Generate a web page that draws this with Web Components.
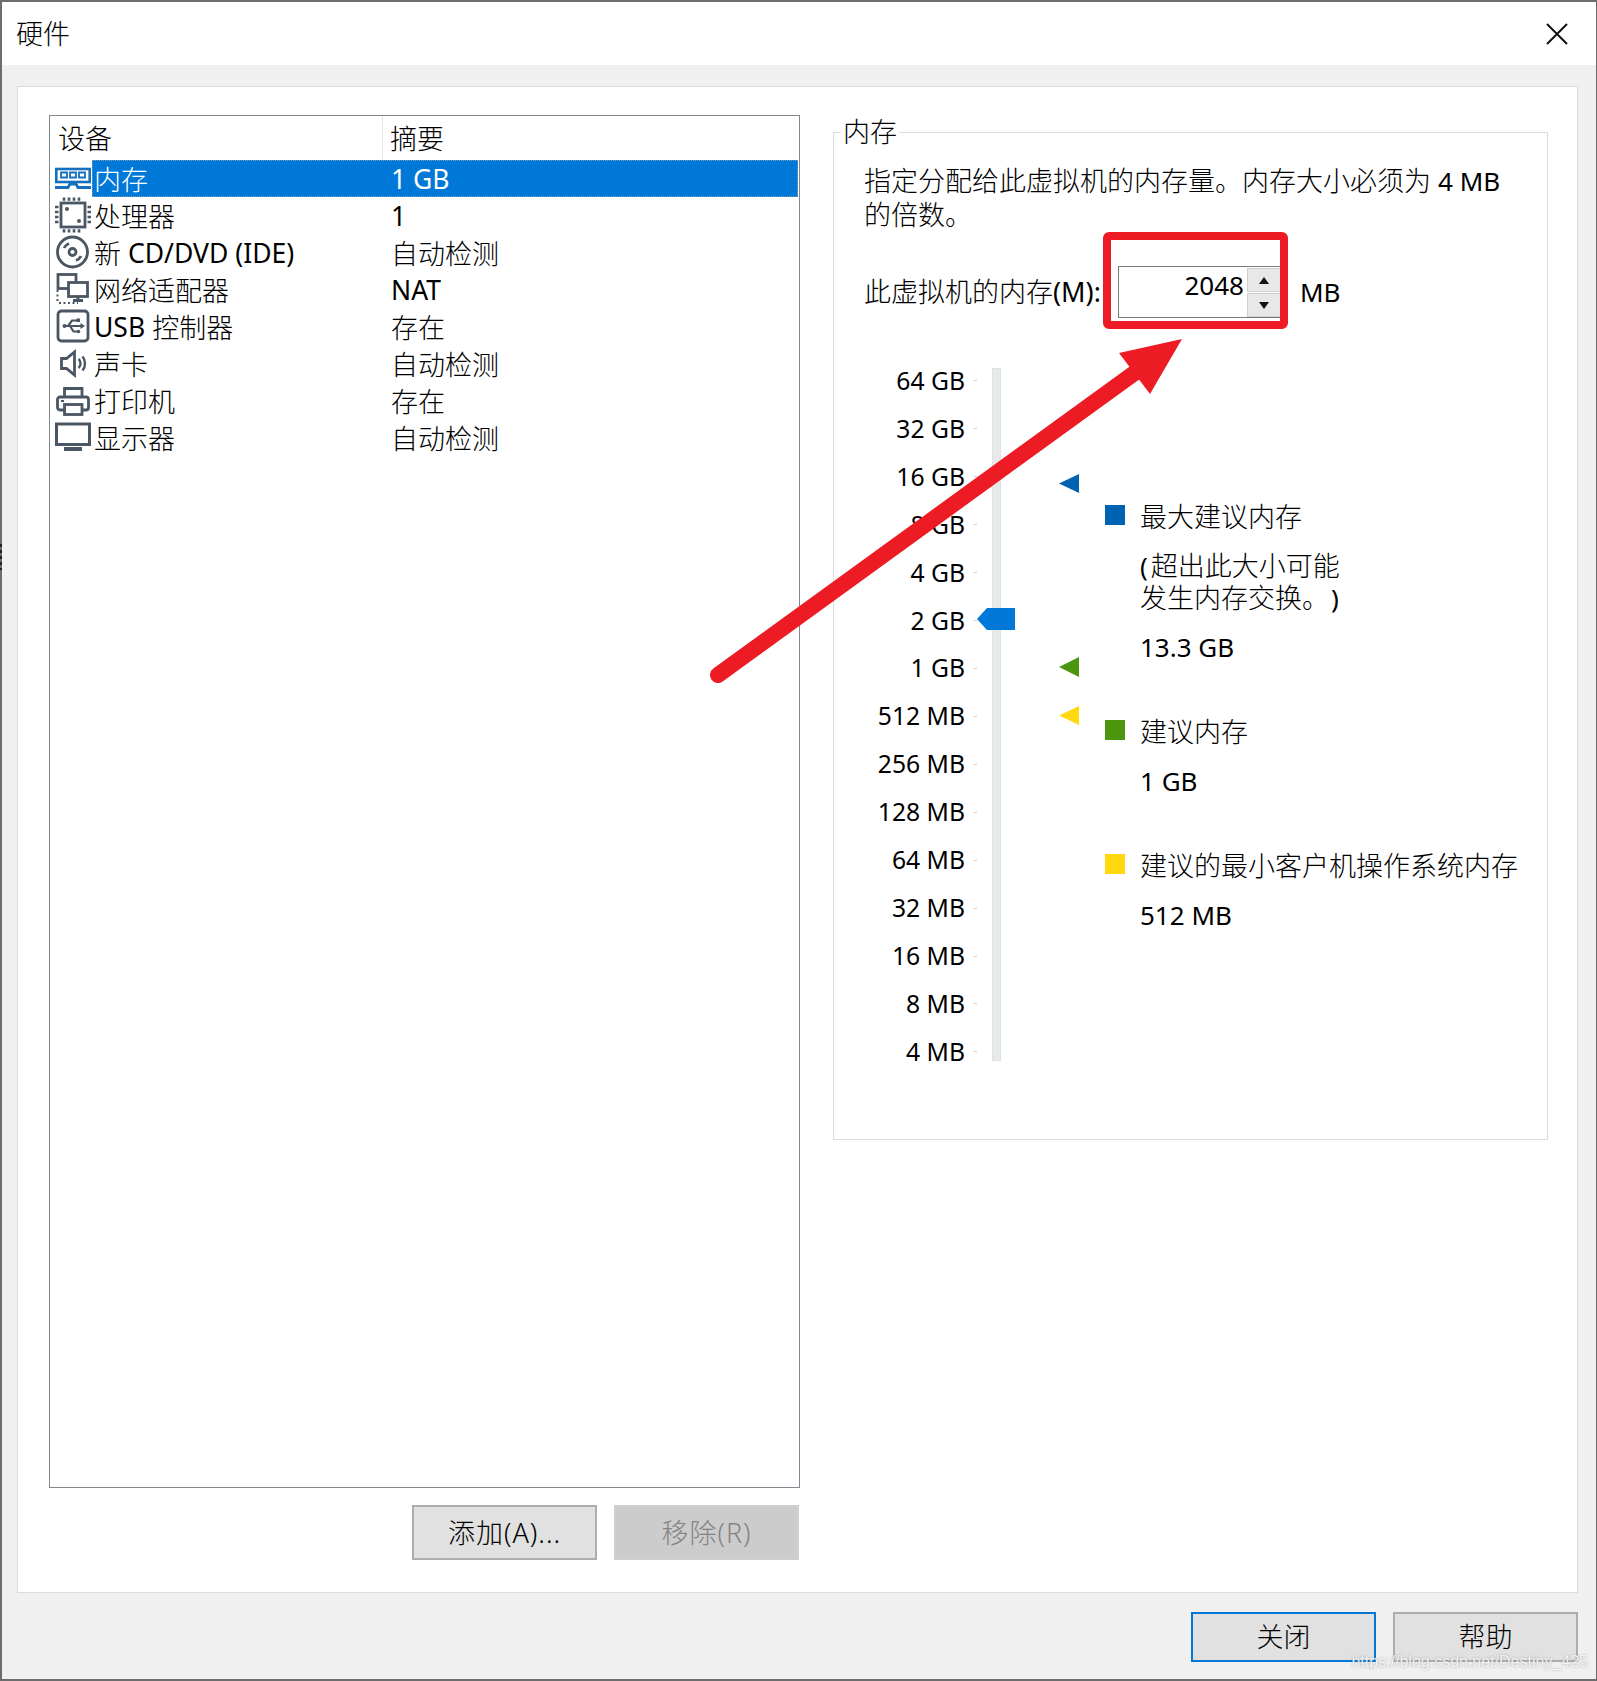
<!DOCTYPE html>
<html lang="zh">
<head>
<meta charset="utf-8">
<title>硬件</title>
<style>
html,body{margin:0;padding:0;background:#f0f0f0;}
body{font:300 27px/32px "Noto Sans","Noto Sans CJK SC",sans-serif;color:#000;text-spacing-trim:space-all;}
</style>
</head>
<body>
<hw-dialog heading="硬件">
	<hw-device-list>
		<hw-device-row icon="memory" name="内存" summary="1 GB" selected></hw-device-row>
		<hw-device-row icon="cpu" name="处理器" summary="1"></hw-device-row>
		<hw-device-row icon="disc" name="新 CD/DVD (IDE)" summary="自动检测"></hw-device-row>
		<hw-device-row icon="network" name="网络适配器" summary="NAT"></hw-device-row>
		<hw-device-row icon="usb" name="USB 控制器" summary="存在"></hw-device-row>
		<hw-device-row icon="sound" name="声卡" summary="自动检测"></hw-device-row>
		<hw-device-row icon="printer" name="打印机" summary="存在"></hw-device-row>
		<hw-device-row icon="display" name="显示器" summary="自动检测"></hw-device-row>
	</hw-device-list>
	<hw-button slot="list-actions">添加(A)...</hw-button>
	<hw-button slot="list-actions" disabled>移除(R)</hw-button>
	<hw-memory-panel slot="panel"></hw-memory-panel>
	<hw-button slot="footer" focused>关闭</hw-button>
	<hw-button slot="footer">帮助</hw-button>
</hw-dialog>
<hw-annotation></hw-annotation>

<script>
(function() {
	const define = (tag, html, setup) => {
		const template = document.createElement('template');
		template.innerHTML = html;
		customElements.define(tag, class extends HTMLElement {
			constructor() {
				super();
				this.attachShadow({mode: 'open'});
				this.shadowRoot.appendChild(template.content.cloneNode(true));
			}
			connectedCallback() {
				if (setup) setup(this, this.shadowRoot);
			}
		});
	};

	//latin runs are set a little smaller than the chinese text
	const latin = (text) => text.replace(/[\x21-\x7e]+( [\x21-\x7e]+)*/g, '<span class="en">$&</span>');

	//device icons, 36x36
	const grey = '#4a5663';
	const ink = `fill="none" stroke="${grey}" stroke-width="2.8"`;
	const icons = {
		memory: `<g fill="none" stroke="#1570bd"><rect x="1.300" y="9" width="33.400" height="13" stroke-width="2.600"/><path d="M6 12.500h6v5H6zM15 12.500h6v5h-6zM24 12.500h6v5h-6z" stroke-width="1.800"/><path d="M0 27.500h13l2-3.500h6l2 3.500h13" stroke-width="2.800"/></g>`,
		cpu: `<rect x="6" y="6" width="24" height="24" ${ink}/><path d="M9 .5v3.300M14 .5v3.300M19 .5v3.300M24 .5v3.300M9 32.200v3.300M14 32.200v3.300M19 32.200v3.300M24 32.200v3.300M0 10h3.500M0 15h3.500M0 20h3.500M0 25h3.500M32.500 10h3.500M32.500 15h3.500M32.500 20h3.500M32.500 25h3.500" fill="none" stroke="${grey}" stroke-width="2.600"/><circle cx="12" cy="12" r="2" fill="${grey}"/><circle cx="24" cy="24" r="2" fill="${grey}"/>`,
		disc: `<circle cx="17.500" cy="18" r="15" ${ink}/><circle cx="17.500" cy="18" r="3.500" ${ink}/><path d="M9 14a9 9 0 0 1 5-4.500M26 22a9 9 0 0 1-5 4.500" ${ink}/>`,
		network: `<rect x="3" y="3.500" width="18" height="14" ${ink}/><rect x="13.500" y="11.500" width="19" height="14" fill="#fff" stroke="${grey}" stroke-width="2.800"/><path d="M23 25.500v3.500M18 29.500h10" ${ink}/><path d="M2.500 19v13M4 32h19" fill="none" stroke="${grey}" stroke-width="2" stroke-dasharray="2 2.500"/>`,
		usb: `<rect x="3" y="3" width="30" height="30" rx="3.500" ${ink}/><path d="M10 18h17M13 18l4-5.500h5M15 18l3.500 5.500h4" fill="none" stroke="${grey}" stroke-width="2.200"/><path d="M30 18l-4.500-3v6z" fill="${grey}"/><circle cx="9.500" cy="18" r="2" fill="${grey}"/><rect x="21.500" y="10.500" width="3.500" height="3.500" fill="${grey}"/><circle cx="23.500" cy="23.500" r="1.800" fill="${grey}"/>`,
		sound: `<path d="M6.500 13.500h5l8-6.500v23l-8-6.500h-5z" ${ink}/><path d="M23.500 14a6 6 0 0 1 0 9M27.500 11.500a11 11 0 0 1 0 14" fill="none" stroke="${grey}" stroke-width="2.400"/>`,
		printer: `<path d="M9.500 15V6.500h17.500V15" ${ink}/><path d="M9 28H5a2.500 2.500 0 0 1-2.500-2.500V17.500A2.500 2.500 0 0 1 5 15h26a2.500 2.500 0 0 1 2.500 2.500v8A2.500 2.500 0 0 1 31 28h-4" ${ink}/><rect x="9.500" y="22.500" width="17.500" height="10" fill="#fff" stroke="${grey}" stroke-width="2.800"/><rect x="6" y="18" width="3" height="2" fill="${grey}"/>`,
		display: `<rect x="1.500" y="5" width="33" height="20.500" fill="none" stroke="${grey}" stroke-width="3"/><rect x="9" y="28" width="18" height="4" fill="${grey}"/>`
	};

	define('hw-dialog', `
		<style>
		:host{display:flex;flex-direction:column;box-sizing:border-box;width:1597px;height:1681px;background:#f0f0f0;border:solid #6d6d6d;border-width:2px 1px 2px 2px;}
		.title{display:flex;align-items:center;justify-content:space-between;height:63px;background:#fff;padding:0 28px 0 14px;flex:none;}
		.title svg{display:block;}
		.card{flex:1;display:flex;margin:21px 18px 0 15px;padding:28px 29px 32px 31px;background:#fff;border:1px solid #dadada;min-height:0;}
		.left{width:751px;display:flex;flex-direction:column;gap:17px;flex:none;}
		.left ::slotted(hw-device-list){flex:1;}
		.actions{display:flex;justify-content:flex-end;gap:17px;padding-right:1px;}
		.right{flex:1;margin-left:33px;min-width:0;}
		.footer{flex:none;display:flex;justify-content:flex-end;gap:17px;height:86px;box-sizing:border-box;padding:19px 18px 0 0;}
		</style>
		<div class="title"><span id="heading"></span>
			<svg width="22" height="22" viewBox="0 0 22 22"><path d="M1 1l20 20M21 1L1 21" stroke="#111" stroke-width="2" fill="none"/></svg>
		</div>
		<div class="card">
			<div class="left">
				<slot></slot>
				<div class="actions"><slot name="list-actions"></slot></div>
			</div>
			<div class="right"><slot name="panel"></slot></div>
		</div>
		<div class="footer"><slot name="footer"></slot></div>
	`, (el, root) => {
		root.getElementById('heading').textContent = el.getAttribute('heading');
	});

	define('hw-device-list', `
		<style>
		:host{display:block;box-sizing:border-box;border:1px solid #828790;background:#fff;min-height:0;}
		.head{display:flex;height:44px;line-height:46px;}
		.head span{box-sizing:border-box;padding-left:8px;}
		.head span:first-child{width:333px;border-right:1px solid #e5e5e5;}
		.head span:last-child{padding-left:7px;}
		</style>
		<div class="head"><span>设备</span><span>摘要</span></div>
		<slot></slot>
	`);

	define('hw-device-row', `
		<style>
		:host{display:flex;height:37px;padding-left:5px;padding-right:1px;line-height:39px;white-space:nowrap;}
		svg{display:block;flex:none;width:36px;height:36px;margin-right:1px;}
		.cells{flex:1;display:flex;box-sizing:border-box;height:37px;}
		.name{width:299px;padding-left:2px;box-sizing:border-box;flex:none;}
		.en{font-size:26.500px;font-weight:400;vertical-align:1px;}
		:host([selected]) .cells{background:#0078d7;color:#fff;outline:1px dotted #7f9fb8;outline-offset:-1px;}
		</style>
		<svg viewBox="0 0 36 36"></svg>
		<div class="cells"><span class="name"></span><span class="summary"></span></div>
	`, (el, root) => {
		root.querySelector('svg').innerHTML = icons[el.getAttribute('icon')];
		root.querySelector('.name').innerHTML = latin(el.getAttribute('name'));
		root.querySelector('.summary').innerHTML = latin(el.getAttribute('summary'));
	});

	define('hw-button', `
		<style>
		:host{display:flex;align-items:center;justify-content:center;box-sizing:border-box;width:185px;height:55px;background:#e1e1e1;border:2px solid #adadad;color:#000;}
		:host([disabled]){background:#cccccc;border-color:#cfcfcf;color:#848484;}
		:host([focused]){border-color:#0078d7;}
		:host([slot="footer"]){height:50px;}
		:host([slot="list-actions"]){letter-spacing:1px;}
		</style>
		<slot></slot>
	`);

	define('hw-spinner', `
		<style>
		:host{display:flex;box-sizing:border-box;width:166px;height:52px;border:1px solid #7a7a7a;background:#fff;font-size:26px;font-weight:400;}
		.value{width:125px;text-align:right;line-height:36px;}
		.buttons{display:flex;flex-direction:column;gap:1px;margin:1px 0 0 3px;width:36px;}
		.buttons div{flex:1;background:#e8e8e8;border:1px solid #cfcfcf;display:flex;align-items:center;justify-content:center;padding-right:2px;max-height:23px;}
		i{display:block;width:0;height:0;border-left:5px solid transparent;border-right:5px solid transparent;}
		.up{border-bottom:7px solid #111;}
		.down{border-top:7px solid #111;}
		</style>
		<div class="value"><slot></slot></div>
		<div class="buttons"><div><i class="up"></i></div><div><i class="down"></i></div></div>
	`);

	define('hw-scale', `
		<style>
		:host{display:flex;position:relative;width:271px;flex:none;}
		.labels{padding-right:12px;width:131px;font-size:24.700px;font-weight:400;}
		.labels div{display:flex;align-items:center;justify-content:flex-end;height:47.93px;white-space:nowrap;}
		.labels div::after{content:"";width:3px;height:1px;background:#cfcfcf;margin-left:9px;margin-right:-12px;}
		.track{width:7px;margin:11px 0 15px 15px;background:#e7eaea;border:1px solid #dfe2e2;}
		.mark{position:absolute;}
		</style>
		<div class="labels"></div>
		<div class="track"></div>
		<svg class="mark" style="left:143px;top:251px" width="38" height="22" viewBox="0 0 38 22"><path d="M0 11L10 0h28v22H10z" fill="#0078d7"/></svg>
		<svg class="mark" style="left:225px;top:117px" width="20" height="19" viewBox="0 0 20 19"><path d="M0 9.500L20 0v19z" fill="#0063b1"/></svg>
		<svg class="mark" style="left:225px;top:300px" width="20" height="20" viewBox="0 0 20 20"><path d="M0 10L20 0v20z" fill="#4b950f"/></svg>
		<svg class="mark" style="left:225px;top:349px" width="20" height="19" viewBox="0 0 20 19"><path d="M0 9.500L20 0v19z" fill="#ffd80f"/></svg>
	`, (el, root) => {
		const sizes = ['64 GB', '32 GB', '16 GB', '8 GB', '4 GB', '2 GB', '1 GB', '512 MB', '256 MB', '128 MB', '64 MB', '32 MB', '16 MB', '8 MB', '4 MB'];
		root.querySelector('.labels').innerHTML = sizes.map((s) => `<div>${s}</div>`).join('');
	});

	define('hw-legend-item', `
		<style>
		:host{display:grid;grid-template-columns:20px auto;column-gap:15px;margin-bottom:53px;white-space:nowrap;}
		i{display:block;width:20px;height:20px;margin-top:4px;background:var(--swatch);}
		.body{display:flex;flex-direction:column;gap:17px;}
		</style>
		<i></i>
		<div class="body"><slot></slot></div>
	`);

	define('hw-memory-panel', `
		<style>
		:host{display:block;}
		fieldset{margin:0;padding:0;border:1px solid #dcdcdc;height:1025px;box-sizing:border-box;}
		legend{margin-left:7px;padding:0 2px;line-height:34px;}
		.desc{margin:15px 0 0 30px;width:650px;line-height:33px;}
		.en{font-size:26px;font-weight:400;}
		.paren{font-size:26px;font-weight:400;}
		.open{margin-right:3px;}
		.close{margin-left:2px;}
		.amount{display:flex;align-items:center;margin:35px 0 0 30px;}
		.amount span.label{width:254px;white-space:nowrap;}
		.amount span.label .en{font-size:27px;}
		.amount span.unit{margin-left:16px;font-size:26px;font-weight:400;}
		.chart{display:flex;margin-top:39px;}
		.legend{padding-top:144px;}
		</style>
		<fieldset>
			<legend>内存</legend>
			<p class="desc">指定分配给此虚拟机的内存量。内存大小必须为 <span class="en">4 MB</span> 的倍数。</p>
			<div class="amount"><span class="label">此虚拟机的内存<span class="en">(M):</span></span><hw-spinner>2048</hw-spinner><span class="unit">MB</span></div>
			<div class="chart">
				<hw-scale></hw-scale>
				<div class="legend">
					<hw-legend-item style="--swatch:#0063b1"><div>最大建议内存</div><div><span class="paren open">(</span>超出此大小可能<br>发生内存交换。<span class="paren close">)</span></div><div class="en">13.3 GB</div></hw-legend-item>
					<hw-legend-item style="--swatch:#4b950f"><div>建议内存</div><div class="en">1 GB</div></hw-legend-item>
					<hw-legend-item style="--swatch:#ffd80f"><div>建议的最小客户机操作系统内存</div><div class="en">512 MB</div></hw-legend-item>
				</div>
			</div>
		</fieldset>
	`);

	//red markup and watermark drawn over the screenshot
	define('hw-annotation', `
		<style>
		:host{position:absolute;left:0;top:0;width:1597px;height:1681px;pointer-events:none;}
		svg{position:absolute;left:0;top:0;}
		.mark{position:absolute;right:9px;top:1650px;font:400 16px/24px "Liberation Sans",sans-serif;color:rgba(255,255,255,.85);text-shadow:0 0 2px rgba(120,120,120,.7);white-space:nowrap;}
		</style>
		<svg width="1597" height="1681" viewBox="0 0 1597 1681">
			<path d="M1 544v26" stroke="#222" stroke-width="2" stroke-dasharray="3 3" fill="none"/>
			<rect x="1107" y="236" width="177" height="89" rx="2" fill="none" stroke="#ed1c24" stroke-width="8"/>
			<path d="M718 675L1140 369" stroke="#ed1c24" stroke-width="16" stroke-linecap="round" fill="none"/>
			<path d="M1182 339L1119 353L1150 394z" fill="#ed1c24"/>
		</svg>
		<div class="mark">https://blog.csdn.net/Destiny_425</div>
	`);
})();
</script>
</body>
</html>
